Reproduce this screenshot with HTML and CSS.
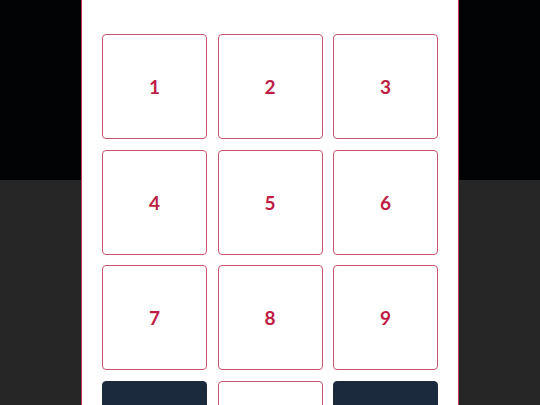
FILE: index.html
```html
<!DOCTYPE html>
<html lang="en">
<head>
    <meta charset="UTF-8">
    <meta name="viewport" content="width=device-width, initial-scale=1.0">
    <title>Keypad</title>
    <link rel="stylesheet" href="styles.css">
</head>
<body>
    <div class="overlay">
        <div class="panel">
            <div class="keypad">
                <button class="key">1</button>
                <button class="key">2</button>
                <button class="key">3</button>
                <button class="key">4</button>
                <button class="key">5</button>
                <button class="key">6</button>
                <button class="key">7</button>
                <button class="key">8</button>
                <button class="key">9</button>
                <button class="key dark"></button>
                <button class="key">0</button>
                <button class="key dark"></button>
            </div>
        </div>
    </div>
</body>
</html>
```

FILE: styles.css
```css
body {
    font-family: Lato, "Noto Sans", sans-serif;
    margin: 0;
    height: 405px;
    overflow: hidden;
    background: linear-gradient(to bottom, #020304 0, #020304 180px, #262626 180px, #262626 100%);
}
.overlay {
    display: flex;
    justify-content: center;
    height: 100%;
}
.panel {
    width: 376px;
    background-color: #fff;
    border-left: 1px solid #c8375a;
    border-right: 1px solid #c8375a;
    padding: 34px 20px 0;
    box-sizing: border-box;
    width: 378px;
}
.keypad {
    display: grid;
    grid-template-columns: repeat(3, 105px);
    grid-auto-rows: 105px;
    gap: 10.5px;
}
.key {
    border: 1px solid #c9566f;
    border-radius: 4px;
    background-color: #fff;
    color: #be1e45;
    font-family: Lato, "Noto Sans", sans-serif;
    font-weight: bold;
    font-size: 19px;
    padding: 0;
    cursor: pointer;
}
.key.dark {
    background-color: #1b2a3d;
    border-color: #1b2a3d;
}
```
